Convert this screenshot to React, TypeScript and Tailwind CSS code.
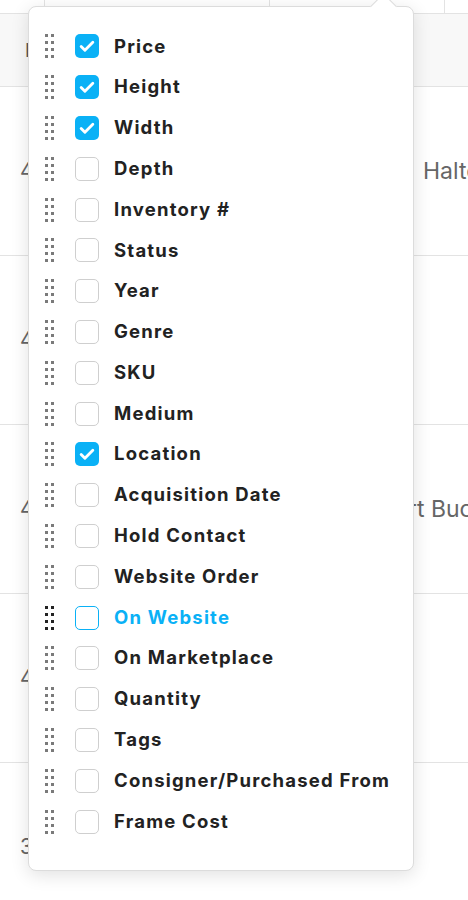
import React from "react";

const COLUMNS = [
  { label: "Price", checked: true },
  { label: "Height", checked: true },
  { label: "Width", checked: true },
  { label: "Depth", checked: false },
  { label: "Inventory #", checked: false },
  { label: "Status", checked: false },
  { label: "Year", checked: false },
  { label: "Genre", checked: false },
  { label: "SKU", checked: false },
  { label: "Medium", checked: false },
  { label: "Location", checked: true },
  { label: "Acquisition Date", checked: false },
  { label: "Hold Contact", checked: false },
  { label: "Website Order", checked: false },
  { label: "On Website", checked: false, hover: true },
  { label: "On Marketplace", checked: false },
  { label: "Quantity", checked: false },
  { label: "Tags", checked: false },
  { label: "Consigner/Purchased From", checked: false },
  { label: "Frame Cost", checked: false },
];

const ROWS = [
  { id: "4021", right: "Halton Gallery", offset: "pl-[31px]" },
  { id: "4018", right: "", offset: "" },
  { id: "4017", right: "Art Bucket", offset: "pl-0" },
  { id: "4012", right: "", offset: "" },
  { id: "3998", right: "", offset: "" },
];

function DragHandle({ dark }: { dark?: boolean }) {
  const dot = dark ? "bg-[#222]" : "bg-[#7a7a7a]";
  return (
    <div className="grid grid-cols-2 gap-x-[3px] gap-y-[4px] w-[9px]">
      {Array.from({ length: 8 }).map((_, i) => (
        <span key={i} className={`block w-[3px] h-[3px] ${dot}`} />
      ))}
    </div>
  );
}

function Check() {
  return (
    <svg viewBox="0 0 24 24" className="w-[20px] h-[20px]" fill="none">
      <path d="M5 12.5l4.5 4.5L19 7.5" stroke="white" strokeWidth="3.4" strokeLinecap="round" strokeLinejoin="round" />
    </svg>
  );
}

function ColumnRow({ label, checked, hover }: { label: string; checked: boolean; hover?: boolean }) {
  return (
    <div className="flex items-center h-[40.8px]">
      <div className="ml-[16px]">
        <DragHandle dark={hover} />
      </div>
      <div
        className={
          checked
            ? "ml-[21px] w-[24px] h-[24px] rounded-[5px] bg-[#0ab1f6] flex items-center justify-center"
            : hover
            ? "ml-[21px] w-[24px] h-[24px] rounded-[5px] border border-[#0ab1f6] bg-white"
            : "ml-[21px] w-[24px] h-[24px] rounded-[5px] border border-[#cfcfcf] bg-white"
        }
      >
        {checked && <Check />}
      </div>
      <span
        className={`ml-[15px] text-[18.5px] font-bold tracking-[0.065em] ${hover ? "text-[#0ab1f6]" : "text-[#222]"}`}
      >
        {label}
      </span>
    </div>
  );
}

export default function App() {
  return (
    <div className="relative w-[468px] h-[900px] overflow-hidden bg-white font-['Inter',sans-serif]">
      {/* table behind */}
      <div className="flex flex-col">
        <div className="flex h-[14px] border-b border-[#e3e3e3]">
          <div className="w-[45px] border-r border-[#e3e3e3]" />
          <div className="w-[225px] border-r border-[#e3e3e3]" />
          <div className="w-[175px] border-r border-[#e3e3e3]" />
          <div className="flex-1" />
        </div>
        <div className="flex items-center h-[73px] bg-[#f8f8f8] border-b border-[#e3e3e3] pl-[25px] text-[18px] text-[#555]">
          Image
        </div>
        {ROWS.map((r) => (
          <div key={r.id} className="flex items-center h-[169px] border-b border-[#e3e3e3] text-[#666]">
            <div className="w-[392px] shrink-0 pl-[20px] text-[21px]">{r.id}</div>
            <div className={`min-w-0 flex-1 whitespace-nowrap overflow-hidden text-[23px] ${r.offset}`}>{r.right}</div>
          </div>
        ))}
      </div>

      {/* column picker popover */}
      <div className="absolute left-[28px] top-[6px] w-[386px] bg-white border border-[#dcdcdc] rounded-[8px] shadow-[0_4px_18px_rgba(0,0,0,0.12)] pt-[19px] pb-[28px]">
        <div className="absolute left-[345px] top-[-10px] w-[19px] h-[19px] rotate-45 bg-white border-l border-t border-[#dcdcdc]" />
        {COLUMNS.map((c) => (
          <ColumnRow key={c.label} label={c.label} checked={c.checked} hover={c.hover} />
        ))}
      </div>
    </div>
  );
}
